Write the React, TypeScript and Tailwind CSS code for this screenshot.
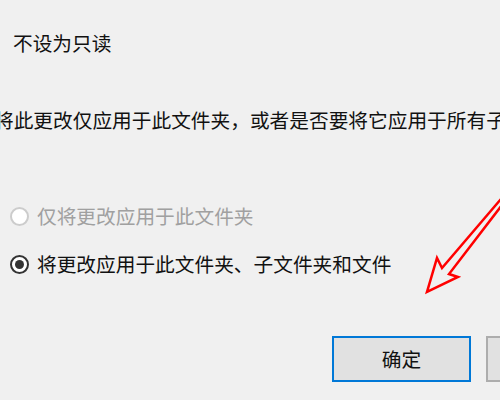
const font = { fontFamily: '"Noto Sans CJK SC", "Microsoft YaHei", sans-serif' };

function Radio({ checked, disabled, label }: { checked?: boolean; disabled?: boolean; label: string }) {
	return (
		<div className="flex h-6 items-center gap-[8px] pl-[10px]">
			<span
				className={
					'flex size-[19px] items-center justify-center rounded-full border-2 bg-white ' +
					(disabled ? 'border-[#cccccc]' : 'border-[#333333]')
				}
			>
				{checked ? <span className="size-[9px] rounded-full bg-[#333333]" /> : null}
			</span>
			<span className={disabled ? 'text-[#a0a0a0]' : 'text-[#111111]'}>{label}</span>
		</div>
	);
}

export default function App() {
	return (
		<div
			className="relative flex h-[400px] w-[500px] flex-col overflow-hidden bg-[#f0f0f0] text-[19.7px] leading-6 text-[#111111]"
			style={font}
		>
			<p className="mt-[31px] ml-[13px]">不设为只读</p>
			<p className="mt-[53px] ml-[-6px] whitespace-nowrap">
				将此更改仅应用于此文件夹，或者是否要将它应用于所有子文件夹和文件?
			</p>
			<div className="mt-[72px] flex flex-col gap-6">
				<Radio disabled label="仅将更改应用于此文件夹" />
				<Radio checked label="将更改应用于此文件夹、子文件夹和文件" />
			</div>
			<div className="mt-[60px] flex gap-[15px] pl-[332px]">
				<button className="flex h-[46px] w-[139px] shrink-0 items-center justify-center border-2 border-[#0078d7] bg-[#e1e1e1] text-[19.7px]">
					确定
				</button>
				<button className="h-[46px] w-[139px] shrink-0 border-2 border-[#adadad] bg-[#e1e1e1] text-[19.7px]">
					取消
				</button>
			</div>
			{/* red annotation arrow */}
			<svg
				className="pointer-events-none absolute left-0 top-0"
				width="500"
				height="400"
				viewBox="0 0 500 400"
				fill="none"
			>
				<path
					d="M512 186 L442 268 L437 258 L427 292 L458 277 L449 274 L512 192"
					stroke="#ff0000"
					strokeWidth="2.5"
					strokeLinejoin="miter"
				/>
			</svg>
		</div>
	);
}
